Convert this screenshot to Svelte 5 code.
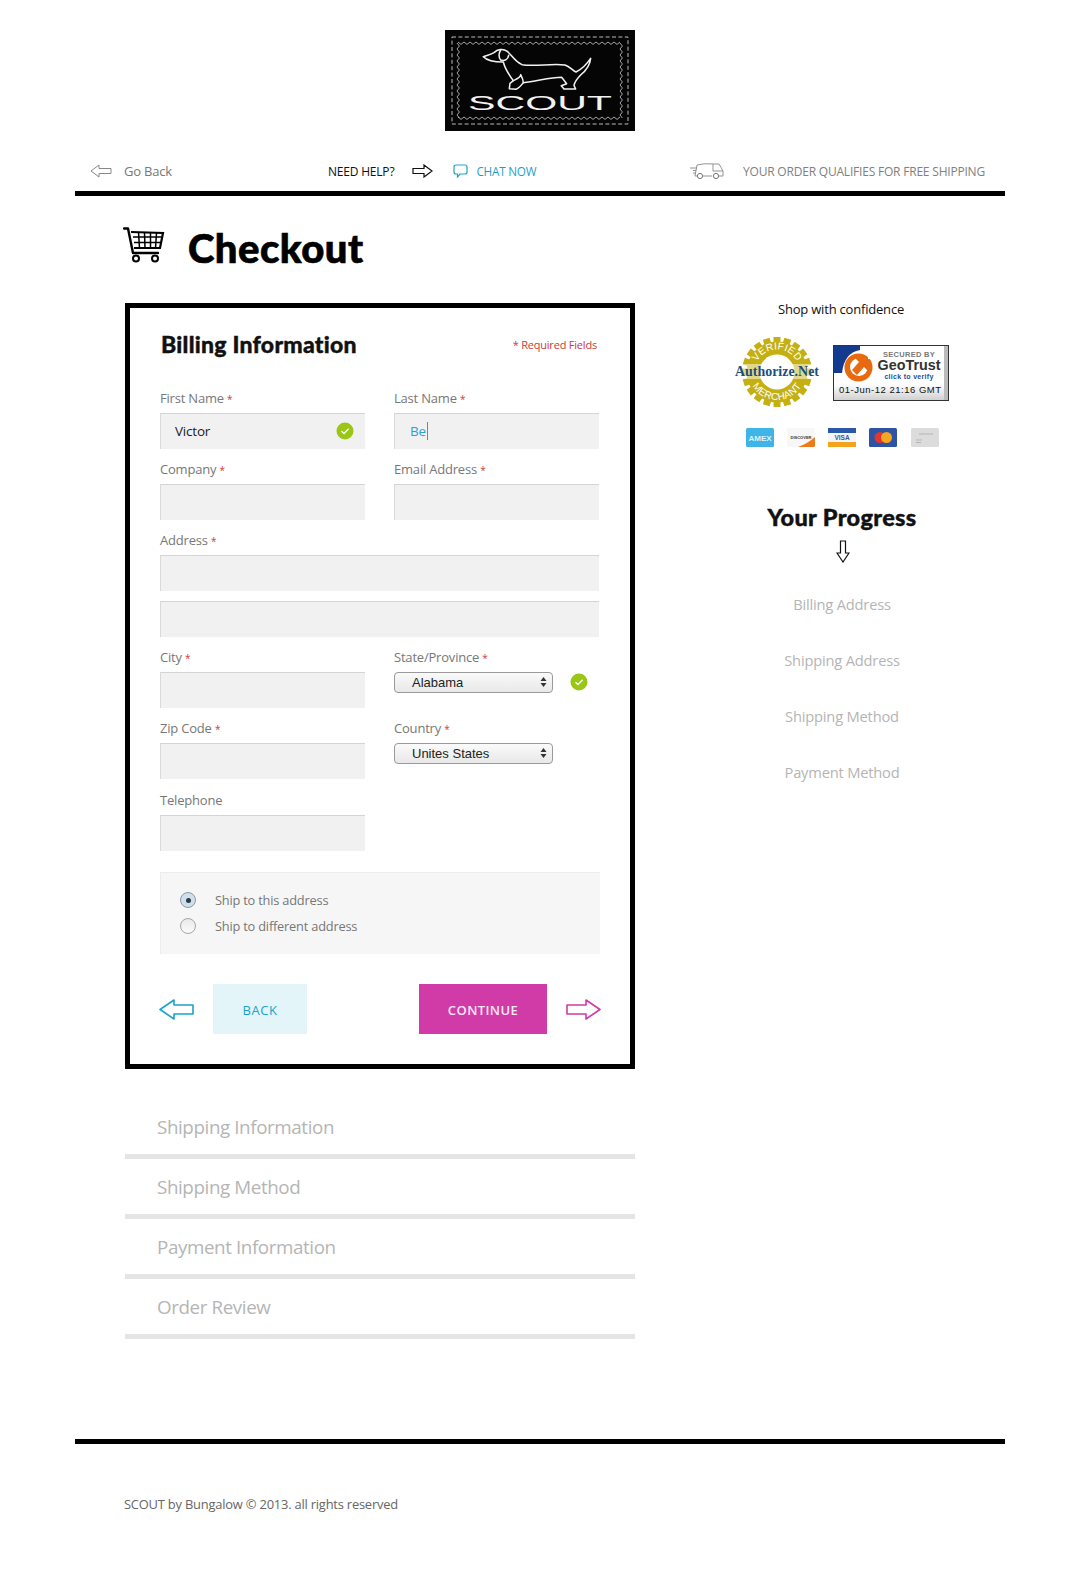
<script>
  const row1 = [
    { label: 'Billing Address' },
    { label: 'Shipping Address' },
    { label: 'Shipping Method' },
    { label: 'Payment Method' }
  ];
  const collapsed = ['Shipping Information', 'Shipping Method', 'Payment Information', 'Order Review'];
  const zig = (x0, y0, n, dx, dy, ax, ay) => {
    let p = `M${x0} ${y0}`;
    for (let i = 1; i <= n; i++) {
      const s = i % 2 ? 1 : 0;
      p += ` L${x0 + dx * i + ax * s} ${y0 + dy * i + ay * s}`;
    }
    return p;
  };
  const gear = Array.from({ length: 20 }, (_, i) => i * 18);
</script>

<div class="page">
  <header class="logo-wrap">
    <svg class="logo" viewBox="0 0 190 101" width="190" height="101">
      <rect width="190" height="101" fill="#050505" />
      <rect x="7" y="7" width="176" height="87" fill="none" stroke="#bbb" stroke-width="1" stroke-dasharray="4 2.4" />
      <g fill="none" stroke="#ccc" stroke-width="0.8">
        <path d={zig(13, 12, 54, 3, 0, 0, 2.4)} />
        <path d={zig(13, 87, 54, 3, 0, 0, 2.4)} />
        <path d={zig(12, 13, 25, 0, 3, 2.4, 0)} />
        <path d={zig(175, 13, 25, 0, 3, 2.4, 0)} />
      </g>
      <g transform="translate(-15 -10) scale(.3333)" fill="none" stroke="#f2f2f2" stroke-width="4.6" stroke-linejoin="round" stroke-linecap="round">
        <path d="M160 110 C172 106 182 104 192 98 C202 88 218 84 232 94 C246 106 254 124 276 134 C310 140 370 130 405 135 C420 140 428 152 438 156 C458 146 472 130 482 115 C480 135 470 150 452 165 C442 175 434 188 432 196 L437 207 L402 207 L394 197 L410 191 L395 172 C360 172 320 184 280 188 C274 196 268 204 258 208 L238 206 L240 190 L250 182 C238 166 226 150 220 126 C205 126 175 126 160 110 Z" />
        <path d="M212 90 C206 100 206 112 212 120 C225 124 234 118 236 106" />
        <path d="M250 182 C262 176 272 172 272 164 M280 188 C280 178 276 172 272 164" />
      </g>
      <text x="95" y="80" text-anchor="middle" class="logo-text" textLength="144" lengthAdjust="spacingAndGlyphs">SCOUT</text>
    </svg>
  </header>

  <nav class="topbar">
    <div class="goback">
      <svg width="22" height="14" viewBox="0 0 22 14"><path d="M1 7 L9 1 V4.5 H21 V9.5 H9 V13 Z" fill="none" stroke="#888" stroke-width="1" /></svg>
      <span>Go Back</span>
    </div>
    <div class="help">
      <span class="need">NEED HELP?</span>
      <svg class="help-arrow" width="21" height="14" viewBox="0 0 21 14"><path d="M1 4.5 H12 V1 L20 7 L12 13 V9.5 H1 Z" fill="none" stroke="#111" stroke-width="1.2" /></svg>
      <svg class="chat" width="15" height="14" viewBox="0 0 15 14"><path d="M3 1 H12 Q14 1 14 3 V8 Q14 10 12 10 H7 L4.5 13 V10 H3 Q1 10 1 8 V3 Q1 1 3 1 Z" fill="none" stroke="#23a3c7" stroke-width="1.2" /></svg>
      <span class="chatnow">CHAT NOW</span>
    </div>
    <div class="ship">
      <svg width="35" height="18" viewBox="0 0 35 18"><path d="M7 3 Q14 1 24 2 L29 2 L33 9 V14 H29 M22 14 H13 M7 14 H5 L7 3 M23 2 V9 H33 M0 6 H7 M3 8.5 H6 M3 11 H6" fill="none" stroke="#888" stroke-width="0.9" /><circle cx="10" cy="14" r="2.6" fill="none" stroke="#777" /><circle cx="26" cy="14" r="2.6" fill="none" stroke="#777" /></svg>
      <span>YOUR ORDER QUALIFIES FOR FREE SHIPPING</span>
    </div>
  </nav>

  <div class="title">
    <svg width="42" height="40" viewBox="0 0 42 40">
      <path d="M1 2.5 H5 L10 27 H35" fill="none" stroke="#000" stroke-width="2.4" stroke-linecap="round" stroke-linejoin="round" />
      <path d="M8 6 L40 7 L37 22 L11 22" fill="none" stroke="#000" stroke-width="2.2" />
      <path d="M15.5 6 L16.5 22 M21.5 6.5 L22 22 M27.5 6.5 L27.5 22 M33.5 7 L32.5 22 M10 11 H39 M11 16.5 H38" fill="none" stroke="#000" stroke-width="1.5" />
      <circle cx="13" cy="32.5" r="3" fill="#fff" stroke="#000" stroke-width="2" />
      <circle cx="32" cy="32.5" r="3" fill="#fff" stroke="#000" stroke-width="2" />
    </svg>
    <h1>Checkout</h1>
  </div>

  <main class="columns">
    <div class="left">
      <section class="card">
        <div class="card-head">
          <h2>Billing Information</h2>
          <span class="req">* Required Fields</span>
        </div>

        <div class="grid">
          <div class="field">
            <span class="lbl">First Name <i>*</i></span>
            <div class="input dark">Victor
              <svg class="check" width="18" height="18" viewBox="0 0 18 18"><circle cx="9" cy="9" r="8.5" fill="#9ac616" /><path d="M5.5 9.3 L8 11.6 L12.6 6.8" fill="none" stroke="#fff" stroke-width="1.4" /></svg>
            </div>
          </div>
          <div class="field">
            <span class="lbl">Last Name <i>*</i></span>
            <div class="input blue"><span class="caret">Be</span></div>
          </div>
          <div class="field"><span class="lbl">Company <i>*</i></span><div class="input"></div></div>
          <div class="field"><span class="lbl">Email Address <i>*</i></span><div class="input"></div></div>
          <div class="field wide">
            <span class="lbl">Address <i>*</i></span>
            <div class="input"></div>
            <div class="input second"></div>
          </div>
          <div class="field"><span class="lbl">City <i>*</i></span><div class="input"></div></div>
          <div class="field">
            <span class="lbl">State/Province <i>*</i></span>
            <div class="select-row">
              <div class="select">Alabama<svg width="7" height="12" viewBox="0 0 7 12"><path d="M3.5 1 L6.5 5 H.5 Z M3.5 11 L.5 7 H6.5 Z" fill="#333" /></svg></div>
              <svg width="18" height="18" viewBox="0 0 18 18"><circle cx="9" cy="9" r="8.5" fill="#9ac616" /><path d="M5.5 9.3 L8 11.6 L12.6 6.8" fill="none" stroke="#fff" stroke-width="1.4" /></svg>
            </div>
          </div>
          <div class="field"><span class="lbl">Zip Code <i>*</i></span><div class="input"></div></div>
          <div class="field">
            <span class="lbl">Country <i>*</i></span>
            <div class="select-row">
              <div class="select">Unites States<svg width="7" height="12" viewBox="0 0 7 12"><path d="M3.5 1 L6.5 5 H.5 Z M3.5 11 L.5 7 H6.5 Z" fill="#333" /></svg></div>
            </div>
          </div>
          <div class="field tel"><span class="lbl">Telephone</span><div class="input"></div></div>
        </div>

        <div class="shipbox">
          <div class="radio-line"><span class="radio on"></span>Ship to this address</div>
          <div class="radio-line"><span class="radio"></span>Ship to different address</div>
        </div>

        <div class="actions">
          <div class="act">
            <svg width="35" height="21" viewBox="0 0 35 21"><path d="M1 10.5 L15 1 V6 H34 V15 H15 V20 Z" fill="none" stroke="#1ba3c6" stroke-width="1.6" stroke-linejoin="round" /></svg>
            <button class="back">BACK</button>
          </div>
          <div class="act">
            <button class="cont">CONTINUE</button>
            <svg width="35" height="21" viewBox="0 0 35 21"><path d="M1 6 H20 V1 L34 10.5 L20 20 V15 H1 Z" fill="none" stroke="#d03ba7" stroke-width="1.6" stroke-linejoin="round" /></svg>
          </div>
        </div>
      </section>

      <div class="collapsed">
        {#each collapsed as c}
          <div class="c-row">{c}</div>
        {/each}
      </div>
    </div>

    <aside class="right">
      <div class="shop">Shop with confidence</div>
      <div class="badges">
        <svg class="seal" width="88" height="70" viewBox="0 0 88 70">
          <g fill="#c4b012">
            {#each gear as a}
              <rect x="40.5" y="0" width="7" height="6" transform={`rotate(${a} 44 35)`} />
            {/each}
          </g>
          <circle cx="44" cy="35" r="30.5" fill="#c4b012" />
          <circle cx="44" cy="35" r="17.5" fill="#fff" />
          <path id="seal-top" d="M21.5 35 A22.5 22.5 0 0 1 66.5 35" fill="none" />
          <path id="seal-bot" d="M16 35 A28 28 0 0 0 72 35" fill="none" />
          <text class="seal-t"><textPath href="#seal-top" startOffset="50%" text-anchor="middle">VERIFIED</textPath></text>
          <text class="seal-t"><textPath href="#seal-bot" startOffset="50%" text-anchor="middle">MERCHANT</textPath></text>
          <rect x="1" y="27" width="86" height="15" fill="#fff" opacity="0.5" />
          <text x="44" y="39" text-anchor="middle" class="seal-n" textLength="84" lengthAdjust="spacingAndGlyphs">Authorize.Net</text>
        </svg>
        <div class="geo">
          <svg class="geo-svg" width="116" height="56" viewBox="0 0 116 56">
            <defs>
              <linearGradient id="gb" x1="0" y1="0" x2="0" y2="1"><stop offset="0" stop-color="#fff" /><stop offset="0.7" stop-color="#fff" /><stop offset="1" stop-color="#cfcfcf" /></linearGradient>
            </defs>
            <rect x=".5" y=".5" width="115" height="55" fill="url(#gb)" stroke="#333" />
            <rect x="111" y="1" width="4" height="54" fill="#bbb" />
            <path d="M1 1 H27 V5 Q11 8 9 28 H1 Z" fill="#143a8f" />
            <circle cx="25.5" cy="22.5" r="14" fill="#e8690f" />
            <circle cx="26" cy="22" r="9" fill="#fff" />
            <path d="M35 9 L35 14 L40 14 L40 5 L30 5 Z" fill="#fff" />
            <path d="M21 12 H35 V26 L31 22 L24 30 L19 25 L26 17 Z" fill="#e8690f" />
            <text x="76" y="12" text-anchor="middle" class="g1">SECURED BY</text>
            <text x="76" y="25" text-anchor="middle" class="g2" textLength="63" lengthAdjust="spacingAndGlyphs">GeoTrust</text>
            <text x="76" y="34" text-anchor="middle" class="g3">click to verify</text>
            <text x="57" y="48" text-anchor="middle" class="g4" textLength="102" lengthAdjust="spacing">01-Jun-12 21:16 GMT</text>
          </svg>
        </div>
      </div>
      <div class="cards">
        <svg width="28" height="19" viewBox="0 0 28 19"><rect width="28" height="19" rx="1.5" fill="#3fb4e6" /><text x="14" y="12.5" text-anchor="middle" class="cc white">AMEX</text></svg>
        <svg width="28" height="19" viewBox="0 0 28 19"><rect width="28" height="19" rx="1.5" fill="#f7f7f7" /><path d="M28 9 Q20 16 11 19 H26.5 Q28 19 28 17.5 Z" fill="#ef7a1a" /><text x="14" y="11" text-anchor="middle" class="cc dark">DISCOVER</text></svg>
        <svg width="28" height="19" viewBox="0 0 28 19"><rect width="28" height="19" rx="1.5" fill="#f5f5f5" /><rect width="28" height="5" fill="#2b57a8" /><rect y="14" width="28" height="5" fill="#f3a41c" /><text x="14" y="12" text-anchor="middle" class="cc visa">VISA</text></svg>
        <svg width="28" height="19" viewBox="0 0 28 19"><rect width="28" height="19" rx="1.5" fill="#2d53a5" /><circle cx="11" cy="9.5" r="5.5" fill="#e2352c" /><circle cx="17.5" cy="9.5" r="5.5" fill="#f5a623" /></svg>
        <svg width="28" height="19" viewBox="0 0 28 19"><rect width="28" height="19" rx="1.5" fill="#dcdcdc" /><path d="M8 6 H22 M5 12 H11 M5 14.5 H10" stroke="#b5b5b5" stroke-width="1" /></svg>
      </div>

      <h3>Your Progress</h3>
      <svg class="down" width="14" height="23" viewBox="0 0 14 23"><path d="M4.5 1 H9.5 V13 H13 L7 22 L1 13 H4.5 Z" fill="none" stroke="#111" stroke-width="1.2" /></svg>

      <ul class="steps">
        {#each row1 as s}
          <li>{s.label}</li>
        {/each}
      </ul>
    </aside>
  </main>

  <footer class="foot">SCOUT by Bungalow © 2013. all rights reserved</footer>
</div>

<style>
  :global(body) { margin: 0; background: #fff; }
  .page {
    width: 1080px;
    height: 1569px;
    box-sizing: border-box;
    padding: 30px 75px 0 75px;
    font-family: "Open Sans", "Noto Sans", sans-serif;
    font-size: 13px;
    color: #777;
    letter-spacing: -0.2px;
  }
  .logo-wrap { display: flex; justify-content: center; }
  .logo { display: block; }
  .logo-text { font-family: "Liberation Sans", sans-serif; font-size: 20px; fill: #f2f2f2; letter-spacing: 0; }

  .topbar {
    margin-top: 24px;
    border-bottom: 5px solid #000;
    display: flex;
    align-items: center;
    padding: 0 19px 4px 15px;
    height: 32px;
    font-size: 12.5px;
  }
  .goback { display: flex; align-items: center; gap: 12px; color: #777; width: 238px; font-size: 13px; }
  .help { display: flex; align-items: center; color: #111; width: 362px; }
  .need { color: #111; font-size: 12px; }
  .help-arrow { margin-left: 18px; }
  .chat { margin-left: 20px; }
  .chatnow { margin-left: 8px; color: #1c9fc3; font-size: 11.7px; }
  .ship { display: flex; align-items: center; gap: 18px; color: #808080; font-size: 12px; }
  .goback svg, .help svg, .ship svg { flex: none; }

  .title { display: flex; align-items: center; margin-top: 29px; padding-left: 48px; height: 46px; }
  .title svg { margin-top: -4px; flex: none; }
  .title h1 {
    margin: 0 0 0 23px;
    font-family: Lato, sans-serif;
    font-weight: 900;
    font-size: 40px;
    line-height: 46px;
    color: #000;
    letter-spacing: 0.5px;
    -webkit-text-stroke: 0.7px #000;
  }

  .columns { display: flex; margin-top: 32px; padding-left: 50px; }
  .left { width: 510px; flex: none; }

  .card {
    border: 5px solid #000;
    box-sizing: border-box;
    height: 766px;
    padding: 19px 30px 0 30px;
  }
  .card-head { display: flex; justify-content: space-between; align-items: center; height: 34px; padding-left: 1px; padding-right: 3px; }
  .card-head h2 {
    margin: 0;
    font-family: Lato, sans-serif;
    font-weight: 900;
    font-size: 23px;
    color: #111;
    letter-spacing: 0.25px;
    -webkit-text-stroke: 0.4px #111;
  }
  .req { color: #d0383a; font-size: 11px; }

  .grid {
    display: grid;
    grid-template-columns: 205px 205px;
    column-gap: 29px;
    row-gap: 10px;
    margin-top: 27px;
  }
  .wide { grid-column: 1 / 3; }
  .tel { margin-top: 1px; }
  .field { display: flex; flex-direction: column; }
  .lbl { height: 20px; line-height: 20px; margin-bottom: 5px; color: #777; font-size: 13px; }
  .lbl i { color: #d0383a; font-style: normal; font-size: 10px; }
  .input {
    position: relative;
    height: 36px;
    box-sizing: border-box;
    background: #f1f1f1;
    border-top: 1px solid #d4d4d4;
    border-left: 1px solid #d9d9d9;
    padding-left: 14px;
    line-height: 35px;
    font-size: 13.5px;
  }
  .dark { color: #222; }
  .blue { color: #2aa3cc; padding-left: 15px; }
  .caret { border-right: 1px solid #2aa3cc; padding-right: 1px; }
  .check { position: absolute; right: 11px; top: 8px; }
  .second { margin-top: 10px; }

  .select-row { display: flex; align-items: center; height: 36px; gap: 17px; }
  .select {
    margin-top: -16px;
    width: 159px;
    height: 21px;
    box-sizing: border-box;
    border: 1px solid #9a9a9a;
    border-radius: 4px;
    background: linear-gradient(#fafafa, #e8e8e8);
    display: flex;
    align-items: center;
    justify-content: space-between;
    padding: 0 5px 0 17px;
    font-family: "Liberation Sans", sans-serif;
    font-size: 13px;
    color: #222;
    letter-spacing: 0;
  }
  .select-row > svg { margin-top: -16px; }

  .shipbox {
    margin-top: 21px;
    height: 82px;
    width: 440px;
    box-sizing: border-box;
    background: #f6f6f6;
    border-top: 1px solid #ececec;
    border-left: 1px solid #ececec;
    padding: 14px 0 0 19px;
  }
  .radio-line { display: flex; align-items: center; height: 26px; color: #777; font-size: 12.8px; }
  .radio {
    width: 14px;
    height: 14px;
    border: 1px solid #a6a6a6;
    border-radius: 50%;
    margin-right: 19px;
    background: linear-gradient(#e9e9e9, #fbfbfb);
    position: relative;
    flex: none;
  }
  .radio.on { background: #cfe0ec; border-color: #8b9aa6; }
  .radio.on::after {
    content: "";
    position: absolute;
    left: 4.5px;
    top: 4.5px;
    width: 5px;
    height: 5px;
    border-radius: 50%;
    background: #2a3b46;
  }

  .actions { display: flex; justify-content: space-between; width: 442px; margin-top: 30px; margin-left: -1px; }
  .act { display: flex; align-items: center; gap: 19px; }
  button {
    border: 0;
    height: 50px;
    font-family: "Open Sans", "Noto Sans", sans-serif;
    font-size: 13px;
    letter-spacing: 0.5px;
    padding: 1px 0 0;
  }
  .back { width: 94px; background: #e4f5fa; color: #1ba3c6; }
  .cont { width: 128px; background: #d03ba7; color: #fbe9f6; font-weight: 600; letter-spacing: 0.4px; }

  .collapsed { margin-top: 30px; }
  .c-row {
    height: 55px;
    border-bottom: 5px solid #e5e5e5;
    padding-left: 32px;
    line-height: 57px;
    font-size: 18.8px;
    color: #b5b5b5;
    letter-spacing: -0.4px;
  }

  .right { width: 330px; flex: none; margin-left: 42px; display: flex; flex-direction: column; align-items: center; }
  .shop { color: #111; font-size: 13px; margin: -4px 2px 0 0; height: 20px; line-height: 20px; }
  .badges { display: flex; gap: 12px; align-items: flex-start; margin-top: 18px; margin-left: -3px; }
  .seal { display: block; }
  .seal-t { font-family: "Liberation Sans", sans-serif; font-size: 10px; fill: #fff; letter-spacing: 0.3px; }
  .seal-n { font-family: "Liberation Serif", serif; font-weight: 700; font-size: 14.5px; fill: #1b4f7e; letter-spacing: 0; }
  .geo { margin-top: 8px; }
  .geo-svg { display: block; }
  .g1 { font-family: "Liberation Sans", sans-serif; font-size: 7.5px; font-weight: 700; fill: #777; letter-spacing: 0.3px; }
  .g2 { font-family: "Liberation Sans", sans-serif; font-size: 15px; font-weight: 700; fill: #333; letter-spacing: 0; }
  .g3 { font-family: "Liberation Sans", sans-serif; font-size: 7px; font-weight: 700; fill: #1b4f9e; letter-spacing: 0.3px; }
  .g4 { font-family: "Liberation Sans", sans-serif; font-size: 9.5px; fill: #111; letter-spacing: 0; }

  .cards { display: flex; gap: 13.25px; margin-top: 21px; }
  .cc { font-family: "Liberation Sans", sans-serif; font-weight: 700; letter-spacing: 0; }
  .cc.white { font-size: 8px; fill: #dff3fb; }
  .cc.dark { font-size: 4px; fill: #333; }
  .cc.visa { font-size: 6.5px; fill: #2b57a8; }

  h3 {
    margin: 55px 0 0;
    font-family: Lato, sans-serif;
    font-weight: 900;
    font-size: 23.5px;
    line-height: 30px;
    color: #111;
    letter-spacing: 0.35px;
    -webkit-text-stroke: 0.45px #111;
  }
  .down { margin: 8px 0 0 1px; display: block; }
  .steps { list-style: none; margin: 28px 0 0; padding: 0; text-align: center; }
  .steps li { height: 56px; line-height: 26px; font-size: 14.7px; color: #b5b5b5; }

  .foot {
    margin-top: 100px;
    border-top: 5px solid #000;
    padding: 51px 0 0 49px;
    font-size: 12.9px;
    color: #666;
  }
</style>
